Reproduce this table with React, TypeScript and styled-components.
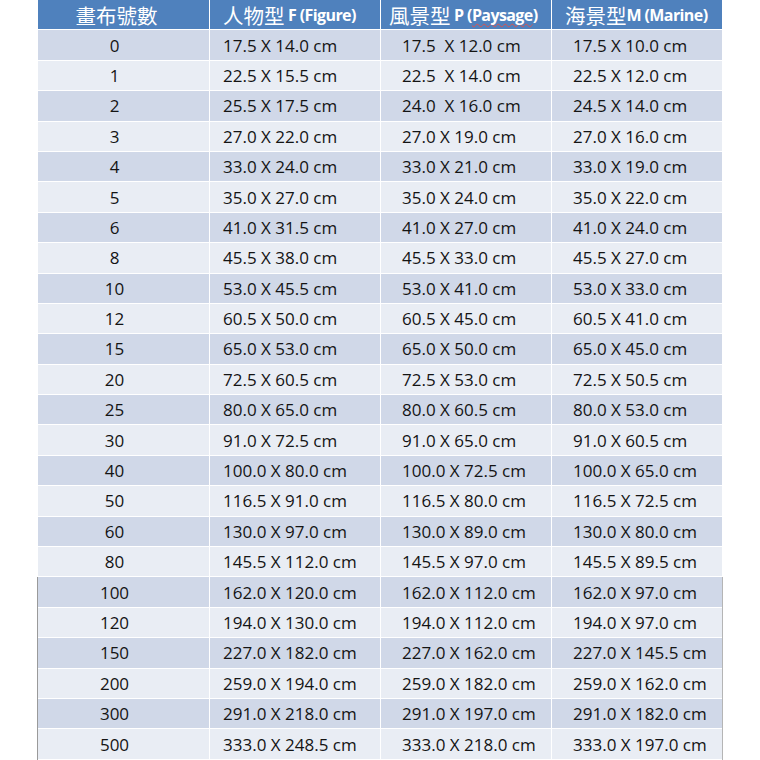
import React from 'react';
import styled, {createGlobalStyle} from 'styled-components';

const GlobalStyle = createGlobalStyle`
    html, body {
        margin: 0;
        padding: 0;
        background: #ffffff;
    }
`;

type SizeRow = {
    no: string;
    figure: string;
    paysage: string;
    marine: string;
};

const rows: SizeRow[] = [
    {no: '0', figure: '17.5 X 14.0 cm', paysage: '17.5  X 12.0 cm', marine: '17.5 X 10.0 cm'},
    {no: '1', figure: '22.5 X 15.5 cm', paysage: '22.5  X 14.0 cm', marine: '22.5 X 12.0 cm'},
    {no: '2', figure: '25.5 X 17.5 cm', paysage: '24.0  X 16.0 cm', marine: '24.5 X 14.0 cm'},
    {no: '3', figure: '27.0 X 22.0 cm', paysage: '27.0 X 19.0 cm', marine: '27.0 X 16.0 cm'},
    {no: '4', figure: '33.0 X 24.0 cm', paysage: '33.0 X 21.0 cm', marine: '33.0 X 19.0 cm'},
    {no: '5', figure: '35.0 X 27.0 cm', paysage: '35.0 X 24.0 cm', marine: '35.0 X 22.0 cm'},
    {no: '6', figure: '41.0 X 31.5 cm', paysage: '41.0 X 27.0 cm', marine: '41.0 X 24.0 cm'},
    {no: '8', figure: '45.5 X 38.0 cm', paysage: '45.5 X 33.0 cm', marine: '45.5 X 27.0 cm'},
    {no: '10', figure: '53.0 X 45.5 cm', paysage: '53.0 X 41.0 cm', marine: '53.0 X 33.0 cm'},
    {no: '12', figure: '60.5 X 50.0 cm', paysage: '60.5 X 45.0 cm', marine: '60.5 X 41.0 cm'},
    {no: '15', figure: '65.0 X 53.0 cm', paysage: '65.0 X 50.0 cm', marine: '65.0 X 45.0 cm'},
    {no: '20', figure: '72.5 X 60.5 cm', paysage: '72.5 X 53.0 cm', marine: '72.5 X 50.5 cm'},
    {no: '25', figure: '80.0 X 65.0 cm', paysage: '80.0 X 60.5 cm', marine: '80.0 X 53.0 cm'},
    {no: '30', figure: '91.0 X 72.5 cm', paysage: '91.0 X 65.0 cm', marine: '91.0 X 60.5 cm'},
    {no: '40', figure: '100.0 X 80.0 cm', paysage: '100.0 X 72.5 cm', marine: '100.0 X 65.0 cm'},
    {no: '50', figure: '116.5 X 91.0 cm', paysage: '116.5 X 80.0 cm', marine: '116.5 X 72.5 cm'},
    {no: '60', figure: '130.0 X 97.0 cm', paysage: '130.0 X 89.0 cm', marine: '130.0 X 80.0 cm'},
    {no: '80', figure: '145.5 X 112.0 cm', paysage: '145.5 X 97.0 cm', marine: '145.5 X 89.5 cm'},
    {no: '100', figure: '162.0 X 120.0 cm', paysage: '162.0 X 112.0 cm', marine: '162.0 X 97.0 cm'},
    {no: '120', figure: '194.0 X 130.0 cm', paysage: '194.0 X 112.0 cm', marine: '194.0 X 97.0 cm'},
    {no: '150', figure: '227.0 X 182.0 cm', paysage: '227.0 X 162.0 cm', marine: '227.0 X 145.5 cm'},
    {no: '200', figure: '259.0 X 194.0 cm', paysage: '259.0 X 182.0 cm', marine: '259.0 X 162.0 cm'},
    {no: '300', figure: '291.0 X 218.0 cm', paysage: '291.0 X 197.0 cm', marine: '291.0 X 182.0 cm'},
    {no: '500', figure: '333.0 X 248.5 cm', paysage: '333.0 X 218.0 cm', marine: '333.0 X 197.0 cm'},
];

// rows from "100" down have the faint grey edge seen in the screenshot
const EDGE_FROM = 18;

const App = () => (
    <>
        <GlobalStyle/>
        <Page>
            <Table>
                <HeaderRow>
                    <HeadCell $align='center'>
                        <Cjk>畫布號數</Cjk>
                    </HeadCell>
                    <HeadCell $pad={13}>
                        <Cjk>人物型</Cjk>
                        <Latin> F (Figure)</Latin>
                    </HeadCell>
                    <HeadCell $pad={8}>
                        <Cjk>風景型</Cjk>
                        <Latin> P (<Misspelt>Paysage</Misspelt>)</Latin>
                    </HeadCell>
                    <HeadCell $pad={13}>
                        <Cjk>海景型</Cjk>
                        <Latin>M (Marine)</Latin>
                    </HeadCell>
                </HeaderRow>
                {rows.map((row, i) => (
                    <Row
                        key={row.no}
                        $dark={i % 2 === 0}
                        $edge={i >= EDGE_FROM}
                    >
                        <Cell $align='center'>{row.no}</Cell>
                        <Cell $pad={13}>{row.figure}</Cell>
                        <Cell $pad={21}>{row.paysage}</Cell>
                        <Cell $pad={21}>{row.marine}</Cell>
                    </Row>
                ))}
            </Table>
        </Page>
    </>
);

const Page = styled.div`
    width: 760px;
    height: 760px;
    overflow: hidden;
    padding-left: 38px;
    box-sizing: border-box;
`;

const Table = styled.div`
    width: 684px;
    display: flex;
    flex-direction: column;
`;

const HeaderRow = styled.div`
    display: grid;
    grid-template-columns: 171px 171px 171px 171px;
    height: 30.4px;
    box-sizing: border-box;
    border-bottom: 1.5px solid #ffffff;
    background: #4f81bd;
`;

const Row = styled.div<{$dark: boolean; $edge: boolean}>`
    display: grid;
    grid-template-columns: 171px 171px 171px 171px;
    height: 30.4px;
    box-sizing: border-box;
    border-bottom: 1.5px solid #ffffff;
    background: ${p => (p.$dark ? '#d0d8e8' : '#e9edf4')};
    box-shadow: ${p => (p.$edge ? '-1px 0 0 #9a9a9a, 1px 0 0 #b5b5b5' : 'none')};
`;

const HeadCell = styled.div<{$align?: 'center'; $pad?: number}>`
    display: flex;
    align-items: center;
    justify-content: ${p => (p.$align === 'center' ? 'center' : 'flex-start')};
    padding-left: ${p => p.$pad ?? 0}px;
    padding-right: ${p => (p.$align === 'center' ? 14 : 0)}px;
    padding-bottom: 2px;
    color: #ffffff;
    white-space: pre;
    & + & {
        border-left: 1.5px solid #ffffff;
    }
`;

const Cjk = styled.span`
    font-family: "Noto Sans CJK TC", sans-serif;
    font-size: 20.5px;
    font-weight: 400;
`;

const Latin = styled.span`
    font-family: "Open Sans", sans-serif;
    font-size: 16px;
    font-weight: 700;
    letter-spacing: -0.6px;
`;

const Misspelt = styled.span`
    text-decoration-line: underline;
    text-decoration-style: wavy;
    text-decoration-color: #d9534f;
    text-decoration-thickness: 1px;
    text-underline-offset: 2px;
    text-decoration-skip-ink: none;
`;

const Cell = styled.div<{$align?: 'center'; $pad?: number}>`
    display: flex;
    align-items: center;
    justify-content: ${p => (p.$align === 'center' ? 'center' : 'flex-start')};
    padding-left: ${p => p.$pad ?? 0}px;
    padding-right: ${p => (p.$align === 'center' ? 18 : 0)}px;
    font-family: "Open Sans", sans-serif;
    font-size: 17px;
    color: #141414;
    white-space: pre;
    & + & {
        border-left: 1.5px solid #ffffff;
    }
`;

export default App;
